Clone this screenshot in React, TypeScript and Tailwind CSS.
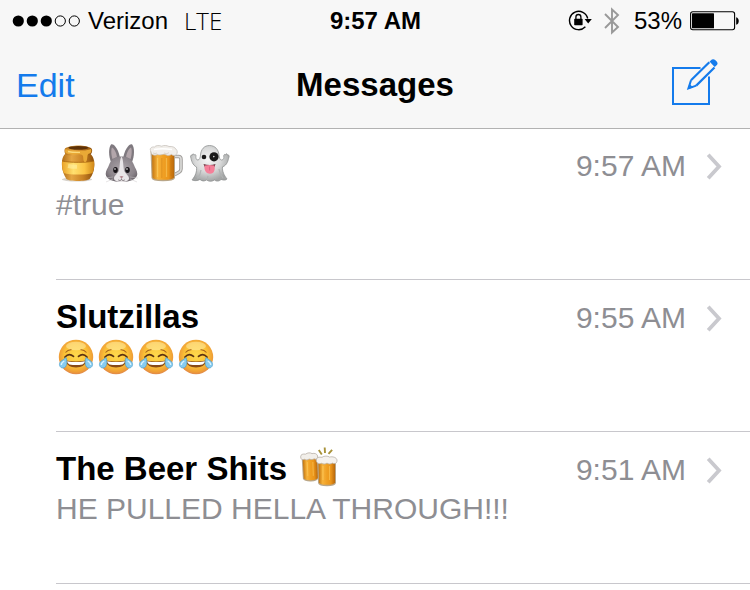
import type { ReactNode } from "react";

function Signal() {
  return (
    <svg className="h-3 w-[68px]" viewBox="12 15 68 12" role="img" aria-label="Signal: 3 of 5">
      {[18.3, 32.3, 46.3].map((x) => (
        <circle key={x} cx={x} cy="21" r="5.6" />
      ))}
      {[60.3, 74.3].map((x) => (
        <circle key={x} cx={x} cy="21" r="5.1" fill="none" stroke="#000" strokeWidth="1" />
      ))}
    </svg>
  );
}

function RotationLock() {
  return (
    <svg className="h-6 w-6" viewBox="0 0 24 24" role="img" aria-label="Rotation lock">
      <path d="M17.4 17.800A9.2 9.2 0 1 1 19.700 9.500" fill="none" stroke="#000" strokeWidth="1.4" />
      <path d="M16.600 10h7.200l-3.600 4.400z" />
      <rect x="6.2" y="9.8" width="8.4" height="6.4" rx=".6" />
      <path d="M7.9 10V8a2.5 2.5 0 0 1 5 0v2" fill="none" stroke="#000" strokeWidth="1.3" />
    </svg>
  );
}

function Bluetooth() {
  return (
    <svg className="h-7 w-4" viewBox="0 0 16 28" role="img" aria-label="Bluetooth">
      <path d="M1 7l13 13-6 5.5V2.5L14 8 1 21" fill="none" stroke="#999" strokeWidth="1.9" />
    </svg>
  );
}

function Battery() {
  return (
    <svg className="h-5 w-[49px]" viewBox="0 0 49 20" role="img" aria-label="Battery">
      <rect x=".6" y=".8" width="44" height="18" rx="2.2" fill="none" stroke="#000" strokeWidth="1.1" />
      <rect x="2" y="2.3" width="22" height="15" rx=".6" />
      <path d="M46.2 6.2c3.4.8 3.4 6.8 0 7.6z" />
    </svg>
  );
}

function Compose() {
  return (
    <svg className="h-[52px] w-[46px]" viewBox="0 0 46 52" fill="none" stroke="#147bec" aria-hidden="true">
      <path d="M28.5 9H1v36h36V17.5" strokeWidth="2" />
      <path d="M19 21.2L37.3 3.3M24.2 26.6L42.5 8.5" strokeWidth="2.200" />
      <path d="M19 21.2L16.4 29.4 24.2 26.6" strokeWidth="2" />
      <path d="M16 30l1.400-5.200 3.800 3.800z" fill="#147bec" stroke="none" />
      <path d="M37.500 2.500l2.400-1.900q1.600-1 3.200.4l1.600 1.600q1.600 1.800.2 3.300l-2.200 2.200z" fill="#147bec" stroke="none" />
    </svg>
  );
}

function Chevron() {
  return (
    <svg className="h-7 w-4" viewBox="0 0 16 28" fill="none" aria-hidden="true">
      <path d="M2.200 2.800L13 14.500 2.200 26.200" stroke="#c9c9ce" strokeWidth="3.8" />
    </svg>
  );
}

function HoneyPot() {
  return (
    <svg className="h-10 w-10" viewBox="0 0 40 40" role="img" aria-label="Honey pot">
      <defs>
        <linearGradient id="pot">
          <stop offset="0" stopColor="#b06d18" />
          <stop offset=".3" stopColor="#e5a643" />
          <stop offset=".65" stopColor="#c98224" />
          <stop offset="1" stopColor="#8a4e0c" />
        </linearGradient>
        <linearGradient id="band">
          <stop offset="0" stopColor="#eba328" />
          <stop offset=".35" stopColor="#ffe070" />
          <stop offset=".7" stopColor="#fbc444" />
          <stop offset="1" stopColor="#cf8618" />
        </linearGradient>
      </defs>
      <ellipse cx="19" cy="34.500" rx="15" ry="2" fill="#d8d3cc" />
      <path d="M8 8C4.500 11 3.800 15 3.900 20c.1 6 2.200 10 4.500 14 3 2.600 20 2.600 23.200 0 3-4 4.600-8 4.700-14 .1-5-1-9-4.800-12z" fill="url(#pot)" />
      <path d="M4.200 16c7 1.800 25 1.800 31.900 0 .5 4 .2 8-1.400 12-6 2-23 2-29 0C4.200 24 3.800 20 4.200 16z" fill="url(#band)" />
      <path d="M4.200 16c7 1.800 25 1.800 31.900 0" stroke="#a8640c" strokeWidth=".8" fill="none" />
      <path d="M7 3.500C6 5 6.400 9.500 9 10c7 1.600 16 1.600 22.500 0 2.500-.6 3.400-5 2-6.500C29-.4 12-.4 7 3.500z" fill="url(#pot)" />
      <ellipse cx="20.300" cy="2.800" rx="10" ry="1.900" fill="#5e3208" />
      <path d="M7.500 4c7 2.500 19 2.500 25.500 0 .8 2 .5 4-1.500 4.500-1.500.4-2 1-2.200 3.500-.3 4-1 5-2.300 5s-1.800-1.800-1.800-4.500-1.400-3.300-4-3.300c-5 0-8.800 1-13-.9-1.500-.7-1.300-3-.7-4.300z" fill="#e9a936" />
      <path d="M10 6.500c4 .9 8 1 12 .8" stroke="#fbd97c" strokeWidth="1.300" fill="none" />
      <path d="M10 21c3 .6 6 .8 9 .8" stroke="#fff0a3" strokeWidth="4" fill="none" opacity=".6" />
    </svg>
  );
}

function Rabbit() {
  return (
    <svg className="h-10 w-10 overflow-visible" viewBox="0 0 40 40" role="img" aria-label="Rabbit face">
      <defs>
        <radialGradient id="fur" cx=".5" cy=".45" r=".6">
          <stop offset="0" stopColor="#aaa3a8" />
          <stop offset=".7" stopColor="#8c858b" />
          <stop offset="1" stopColor="#6b656b" />
        </radialGradient>
      </defs>
      <path d="M9 17C6.500 11 6.400 3 9-.5c3-1.300 8 5.500 9 14z" fill="#7f797f" />
      <path d="M30 17c2.500-6 2.800-14 .2-17.500-3-1.300-8 5.500-9 14z" fill="#7f797f" />
      <path d="M10.500 14C8.900 9 9 4 10 2.500c2 .5 4.500 5.500 5 10z" fill="#b3a6ab" />
      <path d="M28.500 14c1.600-5 1.500-10 .5-11.500-2 .5-4.500 5.500-5 10z" fill="#b3a6ab" />
      <path d="M19.500 11.500c6 0 10.500 2.500 12.500 8.500 1 3 3.300 5.500 3.300 9 0 5-7.300 8-15.800 8S3.700 34 3.700 29c0-3.500 2.300-6 3.300-9 2-6 6.500-8.500 12.500-8.500z" fill="url(#fur)" />
      <path d="M19.500 11.500c-2 3-1.500 9-2.500 14-1 3-5 5-5 7.800 0 2.500 3.500 3.700 7.500 3.700s7.500-1.200 7.500-3.700c0-2.800-4-4.800-5-7.800-1-5-.5-11-2.500-14z" fill="#e9e6e8" />
      <ellipse cx="13.500" cy="25" rx="2.300" ry="3" fill="#171317" />
      <ellipse cx="25.500" cy="25" rx="2.300" ry="3" fill="#171317" />
      <circle cx="13" cy="24" r=".8" fill="#fff" />
      <circle cx="25" cy="24" r=".8" fill="#fff" />
      <path d="M17.500 31.500q2-.8 4 0l-2 2z" fill="#b3868e" />
      <path d="M19.500 33.500v1.200m-3.300.2q1.800 1.500 3.300-.2 1.500 1.700 3.300.2" stroke="#6f666b" strokeWidth=".8" fill="none" />
      <path d="M11 32l-8 1m8 1l-7 3m24-5l8 1m-8 1l7 3" stroke="#ccc8ca" strokeWidth=".5" />
    </svg>
  );
}

function BeerGradient({ id }: { id: string }) {
  return (
    <linearGradient id={id}>
      <stop offset="0" stopColor="#c2740f" />
      <stop offset=".25" stopColor="#f7b23a" />
      <stop offset=".5" stopColor="#f0a024" />
      <stop offset=".75" stopColor="#eb951a" />
      <stop offset="1" stopColor="#b9680b" />
    </linearGradient>
  );
}

function BeerMug() {
  return (
    <svg className="h-10 w-10" viewBox="0 0 40 40" role="img" aria-label="Beer mug">
      <defs>
        <BeerGradient id="beer" />
      </defs>
      <path d="M28 11.500h4.500q2.600 0 2.500 3v9.500q0 2-2 3.200l-4.500 2.600" fill="none" stroke="#a3a19e" strokeWidth="3.600" strokeLinejoin="round" />
      <path d="M28 11.500h4.500q2.600 0 2.500 3v9.500q0 2-2 3.200l-4.500 2.600" fill="none" stroke="#dddcda" strokeWidth="1.600" />
      <path d="M4.500 6h24.500v27q-1 3.200-12 3.200T5.500 33z" fill="#b9a688" />
      <path d="M6 9h22v23.500q-1 2.300-11 2.300T6.500 32.500z" fill="url(#beer)" />
      <path d="M11.500 13v19M20.500 13v19" stroke="#ffda74" strokeWidth="1.300" opacity=".45" />
      <path d="M15.800 13v20M25 13v18" stroke="#a95d08" strokeWidth=".8" opacity=".3" />
      <path d="M4.500 5.500C3.500 3 6 1.500 8.500 2c1-1.600 5-1.900 7-.8 3-1.300 6-.6 7.500.3 3-.4 6 .7 6.800 2.500 1.900 1.500 1.900 4.200.4 5.700-1.300 1.300-3.500.8-4.700-.3-1.500.8-3 1.300-4.500.8-2-.6-2.500-1.200-4.500-.7-1.700.5-3.500.6-5-.1-1.500 1.300-5.500 1.100-6-.9z" fill="#f1eeea" stroke="#c1bbb4" strokeWidth=".7" />
      <path d="M8 4.500q8-1.600 18 0" stroke="#fff" strokeWidth="1.500" fill="none" />
      <path d="M7 8q2 1.200 4 0m7 0q3 1.500 5-.3" stroke="#d4cdc4" strokeWidth=".8" fill="none" />
    </svg>
  );
}

function Ghost() {
  return (
    <svg className="h-10 w-10" viewBox="0 0 40 40" role="img" aria-label="Ghost">
      <defs>
        <radialGradient id="sheet" cx=".45" cy=".4" r=".6">
          <stop offset="0" stopColor="#f6f6f6" />
          <stop offset=".55" stopColor="#d9dada" />
          <stop offset="1" stopColor="#a3a5a5" />
        </radialGradient>
      </defs>
      <path d="M19.500.5c5.500 0 9 4 9.500 9.500.2 2.500.8 5 2.500 5 2.300 0 2.500-2 2.300-4-.2-1.500 1-2 1.700-1 .3-1.700 1.900-1.500 2 .2 1.200-.6 2 .4 1.500 1.700-1 3.500-1.500 8-6.500 10-.5 4 1.500 8.500 4.500 12-2 2-4 1-6 .5-2 2.300-5 2-6.500.5-2.500 1.800-5.500 1.800-8 0-2 1.500-4.500 1.500-6.500-.5-2.500 1.500-5.500 1.700-8 .5C5.500 31 7 26.500 6.500 22 2.500 20 1.500 16 .7 12c-.4-1.400.5-2.300 1.500-1.700.1-1.700 1.700-1.900 2-.2.8-1 2-.5 1.700 1-.2 2 .3 4 2 3.900 1.700 0 2.400-2.500 2.600-5C11 4.500 14 .5 19.500.5z" fill="url(#sheet)" stroke="#8f9292" strokeWidth=".8" />
      <path d="M11 25q-.5 5-3.500 8.500M18 31q-.5 2-1 4M29 24q.5 5 4 9" stroke="#b0b3b3" strokeWidth="1.200" fill="none" />
      <circle cx="14" cy="12" r="2.300" fill="#191919" />
      <circle cx="24" cy="11.800" r="4.600" fill="#191919" />
      <circle cx="23.800" cy="11.600" r=".8" fill="#ddd" />
      <path d="M13.500 19q6.500 2 12 0-.5 3-2.500 4l-6.500.2q-2.500-1.200-3-4.200z" fill="#6b333f" />
      <path d="M14.700 20.500q5-1.200 9.600 0c1 3 .5 8.300-4.300 8.300s-6.300-5.300-5.300-8.300z" fill="#f58099" />
      <path d="M19.600 21.500v4" stroke="#d4577a" strokeWidth=".7" />
    </svg>
  );
}

function JoyFace({ id }: { id: string }) {
  return (
    <svg className="h-9 w-9" viewBox="0 0 36 36" role="img" aria-label="Face with tears of joy">
      <defs>
        <radialGradient id={id} cx=".5" cy=".45" r=".56">
          <stop offset="0" stopColor="#fed94e" />
          <stop offset=".6" stopColor="#fbc136" />
          <stop offset=".88" stopColor="#ee9c36" />
          <stop offset="1" stopColor="#dc8450" />
        </radialGradient>
      </defs>
      <circle cx="18" cy="18" r="17.200" fill={`url(#${id})`} />
      <ellipse cx="18" cy="7" rx="10" ry="4.300" fill="#fff0b0" opacity=".5" />
      <path d="M7.500 13.500q2.500-3 6-2.700M28.500 13.500q-2.500-3-6-2.700" fill="none" stroke="#a5621c" strokeWidth="1.100" />
      <path d="M7 18q4-4.500 8.500-.6M29 18q-4-4.500-8.500-.6" fill="none" stroke="#5c3211" strokeWidth="1.700" strokeLinecap="round" />
      <path d="M8 21.500q10 2 20 0-1 7-10 7t-10-7z" fill="#8a4a14" />
      <path d="M9 22.200q9 1.700 18 0-.5 2.500-2.500 3.300-6.500 1-13 0Q9.500 24.700 9 22.200z" fill="#fff" />
      <path d="M8 18.500c1.600 4 1 10.500-3 10.500-3.500 0-4.700-4.200-2.300-6.500C4.200 21 6.500 20.200 8 18.500zM28 18.500c-1.600 4-1 10.500 3 10.500 3.500 0 4.700-4.200 2.300-6.500-1.500-1.500-3.800-2.300-5.300-4z" fill="#86cbee" stroke="#4a9fcd" strokeWidth=".7" />
      <path d="M6.300 22q-3 1.500-3 4M29.700 22q3 1.500 3 4" stroke="#daf4ff" strokeWidth="1.300" fill="none" />
    </svg>
  );
}

function ClinkingMugs() {
  return (
    <svg className="h-10 w-10 overflow-visible" viewBox="0 0 40 40" role="img" aria-label="Clinking beer mugs">
      <defs>
        <BeerGradient id="clink" />
      </defs>
      <g transform="rotate(-2 11 18)">
        <path d="M3 7h16v22.500q-1 3-7.500 3T3.500 29.500z" fill="#b9a688" />
        <path d="M4 9h14.500v20q-1 2.200-7 2.200t-7-2.200z" fill="url(#clink)" />
        <path d="M8.500 13v14M14 13v14" stroke="#ffd46c" strokeWidth="1" opacity=".5" />
        <path d="M2 7.500c0-2.500 2.500-3 5-2.500 2-1.500 5-1.500 6.500-.3 2.500-.7 5 .3 5.500 2.500.3 3-1.500 3.800-3.500 2.800-2 1-4 .5-5 0-2 1.200-3.500.8-4.500.1-2.500 1-4-.1-4-2.600z" fill="#f2efea" stroke="#b9b2aa" strokeWidth=".8" />
      </g>
      <path d="M18.500 11h18.500v23q-1 3.200-9 3.200t-9-3.200z" fill="#b9a688" />
      <path d="M19.500 13h16.500v20.500q-1 2.300-8 2.300t-8-2.300z" fill="url(#clink)" />
      <path d="M24 17v14M30.500 17v14" stroke="#ffd46c" strokeWidth="1.100" opacity=".5" />
      <path d="M17.200 11c0-2.500 3-3.300 5.800-2.700 2-1.600 6-1.600 7.500-.2 3-.9 7 .2 7.500 2.900.3 3.500-2.300 4.300-4.600 3.100-1.700 1.300-4.200 1-5.400 0-2 1.500-4 1-5.300.2-3 1-5.500-.3-5.500-3.300z" fill="#f5f2ee" stroke="#b9b2aa" strokeWidth=".8" />
      <path d="M22.800 5.500L19.800 1M26 4l-.3-5.500M29.500 4.800l3.600-4" stroke="#a8923a" strokeWidth="1.900" />
    </svg>
  );
}

type Conversation = { id: string; title: ReactNode; preview: ReactNode; time: string };

const conversations: Conversation[] = [
  {
    id: "true",
    title: (
      <span className="flex gap-1 pl-[2px]">
        <HoneyPot />
        <Rabbit />
        <BeerMug />
        <Ghost />
      </span>
    ),
    preview: "#true",
    time: "9:57 AM",
  },
  {
    id: "slutzillas",
    title: "Slutzillas",
    preview: (
      <span className="flex gap-1 pl-[2px]">
        {["joy-1", "joy-2", "joy-3", "joy-4"].map((id) => (
          <JoyFace key={id} id={id} />
        ))}
      </span>
    ),
    time: "9:55 AM",
  },
  {
    id: "beer",
    title: (
      <>
        The Beer Shits
        <ClinkingMugs />
      </>
    ),
    preview: "HE PULLED HELLA THROUGH!!!",
    time: "9:51 AM",
  },
];

export default function App() {
  return (
    <div className="min-h-screen bg-white font-['Liberation_Sans',Arial,sans-serif] text-black">
      <header className="border-b border-[#b2b2b2] bg-[#f7f7f7]">
        <div className="grid h-[42px] grid-cols-[1fr_auto_1fr] items-center pr-[11px] pl-3 text-[24px]">
          <div className="flex items-center gap-2">
            <Signal />
            <span>Verizon</span>
            <span className="pl-2 font-['Open_Sans',sans-serif] leading-6 font-light">LTE</span>
          </div>
          <time className="font-bold">9:57 AM</time>
          <div className="flex items-center justify-end gap-2">
            <RotationLock />
            <span className="flex items-center gap-3.5 pl-1">
              <Bluetooth />
              <span>53%</span>
            </span>
            <Battery />
          </div>
        </div>
        <nav className="grid h-[86px] grid-cols-[1fr_auto_1fr] items-center px-4">
          <button type="button" className="justify-self-start text-[34px] text-[#147bec]">
            Edit
          </button>
          <h1 className="text-[33px] font-bold">Messages</h1>
          <button type="button" aria-label="Compose message" className="justify-self-end pr-4">
            <Compose />
          </button>
        </nav>
      </header>
      <main>
        <ul className="-mt-px pl-14">
          {conversations.map((c) => (
            <li key={c.id} className="border-b border-[#c8c7cc]">
              <a href={`#${c.id}`} className="flex h-[151px] items-start justify-between pt-[17px] pr-7">
                <div className="min-w-0">
                  <h2 className="flex h-10 items-center gap-3 text-[33px] leading-10 font-bold">{c.title}</h2>
                  <div className="flex h-10 items-center text-[30px] leading-[42px] text-[#8e8e93]">{c.preview}</div>
                </div>
                <div className="flex items-center gap-5 text-[30px] leading-[42px] text-[#8e8e93]">
                  <time>{c.time}</time>
                  <Chevron />
                </div>
              </a>
            </li>
          ))}
        </ul>
      </main>
    </div>
  );
}
